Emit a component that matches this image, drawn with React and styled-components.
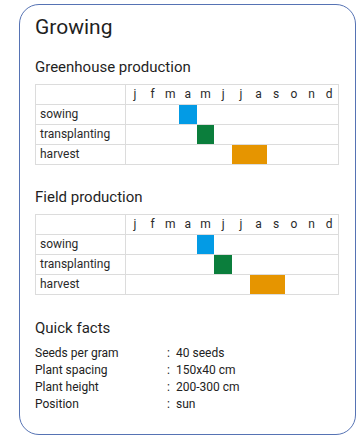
import React from "react";
import styled, { createGlobalStyle } from "styled-components";

const Global = createGlobalStyle`
  html, body { margin: 0; padding: 0; background: #fff; }
  body { font-family: Roboto, "Noto Sans", Arial, sans-serif; color: #212121; }
`;

const Page = styled.div`
  padding: 4px 0 0 19px;
`;

const Card = styled.section`
  box-sizing: border-box;
  width: 337px;
  height: 431px;
  border: 1px solid #5673b4;
  border-radius: 20px;
  padding: 10px 15px 0 15px;
`;

const Title = styled.h1`
  margin: 0;
  font-size: 21px;
  line-height: 24px;
  font-weight: 400;
  color: #1f1f1f;
`;

const Heading = styled.h2`
  margin: ${(p) => p.$top}px 0 7px 0;
  font-size: 15px;
  line-height: 20px;
  font-weight: 400;
  color: #1f1f1f;
`;

const Table = styled.div`
  border: 1px solid #dcdcdc;
  width: 304px;
  box-sizing: border-box;
  font-size: 12px;
  color: #2a2a2a;
`;

const Row = styled.div`
  display: flex;
  height: 19px;
  & + & {
    border-top: 1px solid #dcdcdc;
  }
`;

const Label = styled.div`
  width: 89px;
  flex: none;
  border-right: 1px solid #dcdcdc;
  padding-left: 4px;
  box-sizing: border-box;
  line-height: 19px;
  width: 90px;
`;

const Months = styled.div`
  flex: 1;
  display: grid;
  grid-template-columns: repeat(12, 1fr);
`;

const MonthLetter = styled.div`
  text-align: center;
  line-height: 19px;
`;

const Bar = styled.div`
  grid-row: 1;
  grid-column: ${(p) => p.$start} / span ${(p) => p.$span};
  background: ${(p) => p.$color};
`;

const Facts = styled.div`
  margin-top: 6px;
  display: grid;
  grid-template-columns: 132px 9px 1fr;
  font-size: 12px;
  line-height: 17px;
  color: #222;
`;

const COLORS = { sowing: "#039be5", transplanting: "#0b7e3c", harvest: "#e69500" };
const LETTERS = ["j", "f", "m", "a", "m", "j", "j", "a", "s", "o", "n", "d"];

function Schedule({ rows }) {
  return (
    <Table>
      <Row>
        <Label />
        <Months>
          {LETTERS.map((l, i) => (
            <MonthLetter key={i}>{l}</MonthLetter>
          ))}
        </Months>
      </Row>
      {rows.map((r) => (
        <Row key={r.name}>
          <Label>{r.name}</Label>
          <Months>
            <Bar $start={r.start} $span={r.span} $color={COLORS[r.name]} />
          </Months>
        </Row>
      ))}
    </Table>
  );
}

const greenhouse = [
  { name: "sowing", start: 4, span: 1 },
  { name: "transplanting", start: 5, span: 1 },
  { name: "harvest", start: 7, span: 2 },
];
const field = [
  { name: "sowing", start: 5, span: 1 },
  { name: "transplanting", start: 6, span: 1 },
  { name: "harvest", start: 8, span: 2 },
];

const facts = [
  ["Seeds per gram", "40 seeds"],
  ["Plant spacing", "150x40 cm"],
  ["Plant height", "200-300 cm"],
  ["Position", "sun"],
];

export default function App() {
  return (
    <>
      <Global />
      <Page>
        <Card>
          <Title>Growing</Title>
          <Heading $top={18}>Greenhouse production</Heading>
          <Schedule rows={greenhouse} />
          <Heading $top={22}>Field production</Heading>
          <Schedule rows={field} />
          <Heading $top={23}>Quick facts</Heading>
          <Facts>
            {facts.map(([k, v]) => (
              <React.Fragment key={k}>
                <span>{k}</span>
                <span>:</span>
                <span>{v}</span>
              </React.Fragment>
            ))}
          </Facts>
        </Card>
      </Page>
    </>
  );
}
